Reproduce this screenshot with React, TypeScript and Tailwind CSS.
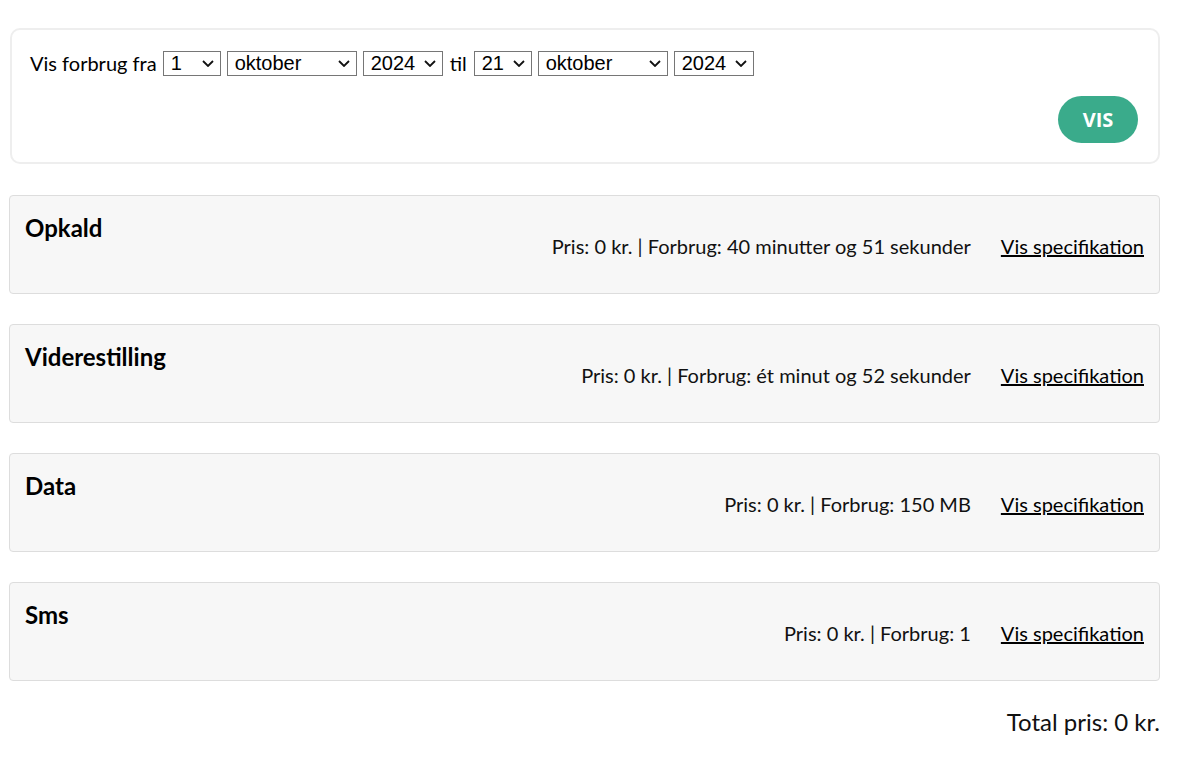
const days = Array.from({ length: 31 }, (_, i) => String(i + 1));
const months = [
  "januar",
  "februar",
  "marts",
  "april",
  "maj",
  "juni",
  "juli",
  "august",
  "september",
  "oktober",
  "november",
  "december",
];
const years = ["2023", "2024"];

const rows = [
  { title: "Opkald", info: "Pris: 0 kr. | Forbrug: 40 minutter og 51 sekunder" },
  { title: "Viderestilling", info: "Pris: 0 kr. | Forbrug: ét minut og 52 sekunder" },
  { title: "Data", info: "Pris: 0 kr. | Forbrug: 150 MB" },
  { title: "Sms", info: "Pris: 0 kr. | Forbrug: 1" },
];

function Select({
  value,
  options,
  className = "",
}: {
  value: string;
  options: string[];
  className?: string;
}) {
  return (
    <div className={`relative ${className}`}>
      <select
        defaultValue={value}
        className="block h-[25px] w-full appearance-none rounded-none border border-[#767676] bg-white pl-[7px] text-[20px] leading-none text-black [font-family:'Liberation_Sans',Arial,sans-serif]"
      >
        {options.map((o) => (
          <option key={o} value={o}>
            {o}
          </option>
        ))}
      </select>
      <svg
        viewBox="0 0 12 7"
        className="pointer-events-none absolute right-[7px] top-[9px] h-[7px] w-[12px]"
        fill="none"
        stroke="#111"
        strokeWidth="1.8"
      >
        <path d="M1 1l5 5 5-5" />
      </svg>
    </div>
  );
}

function UsageCard({ title, info }: { title: string; info: string }) {
  return (
    <div className="flex h-[99px] justify-between rounded-[4px] border border-[#dddddd] bg-[#f7f7f7] px-[15px] pt-[16px]">
      <h3 className="text-[24px] font-bold leading-[32px] text-black">{title}</h3>
      <div className="mt-[22px] flex items-start gap-[30px] text-[20px] leading-[24px] text-[#111]">
        <span>{info}</span>
        <a href="#" className="text-black underline">
          Vis specifikation
        </a>
      </div>
    </div>
  );
}

export default function App() {
  return (
    <div className="min-h-screen bg-white pl-[9px] pt-[28px] text-black [font-family:Lato,'Noto_Sans',sans-serif]">
      <div className="w-[1151px]">
        <form className="ml-px h-[136px] rounded-[10px] border-2 border-[#eeeeee] px-[18px] pt-[18px]">
          <div className="flex items-center gap-[6px] text-[20px]">
            <span>Vis forbrug fra</span>
            <Select value="1" options={days} className="w-[58px]" />
            <Select value="oktober" options={months} className="w-[130px]" />
            <Select value="2024" options={years} className="w-[80px]" />
            <span className="px-px">til</span>
            <Select value="21" options={days} className="w-[58px]" />
            <Select value="oktober" options={months} className="w-[130px]" />
            <Select value="2024" options={years} className="w-[80px]" />
          </div>
          <div className="mt-[18px] flex justify-end pr-[2px]">
            <button
              type="button"
              className="h-[47px] w-[80px] rounded-full bg-[#3aab8b] text-[20px] font-bold text-white [font-family:'Open_Sans',sans-serif]"
            >
              VIS
            </button>
          </div>
        </form>

        <div className="mt-[31px] flex flex-col gap-[30px]">
          {rows.map((r) => (
            <UsageCard key={r.title} title={r.title} info={r.info} />
          ))}
        </div>

        <div className="mt-[23px] text-right text-[24px] text-[#111]">Total pris: 0 kr.</div>
      </div>
    </div>
  );
}
